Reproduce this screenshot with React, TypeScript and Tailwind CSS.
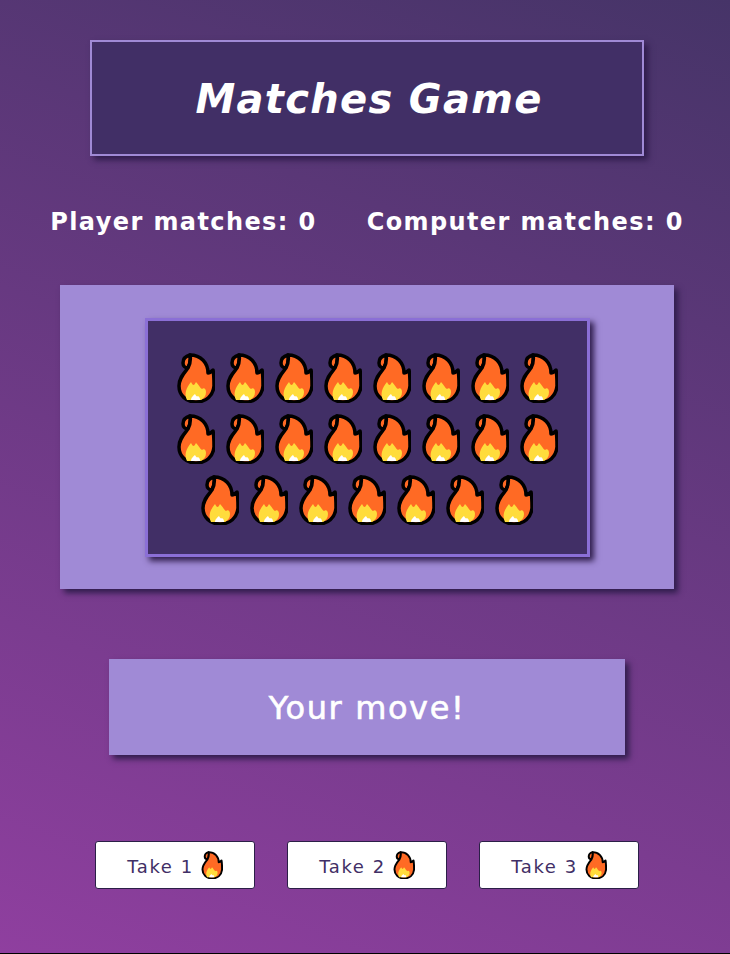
import React from 'react';

const Flame: React.FC<{ className?: string }> = ({ className }) => (
    <svg viewBox="0 0 38 50" className={className}>
        <path
            d="M13 2C9 3 6 6 6 10C6 13 8 15 11 15C13 11 14 7 13 2Z"
            fill="#ff6a24"
            stroke="#000"
            strokeWidth="3.5"
            strokeLinejoin="round"
        />
        <path
            d="M13 2C24 2 31 10 31 20C33 20 34 19 36 17C37 21 37 27 37 33C36 43 29 49 19 49C9 49 2 42 2 33C2 25 7 20 11 15C13 11 14 7 13 2Z"
            fill="#ff6a24"
            stroke="#000"
            strokeWidth="3.5"
            strokeLinejoin="round"
        />
        <path d="M10 47C7 41 9 35 14 29C16 33 17 33 19 29C22 32 23 35 25 36C27 34 29 36 29 39C29 43 27 45 24 47Z" fill="#ffdc3c" />
        <path d="M14 47C14 44 16 43 18 41C19 43 20 44 21 43C23 44 23 46 23 47Z" fill="#fff" />
    </svg>
);

const rows = [8, 8, 7];

export default function App() {
    return (
        <main className="h-[954px] overflow-hidden border-b border-black bg-[linear-gradient(20deg,#8f3f9f,#463468)] pl-1 flex flex-col items-center font-['DejaVu_Sans',sans-serif] text-white">
            <h1 className="mt-10 w-[554px] h-[116px] flex items-center justify-center border-2 border-[#a08ad6] bg-[#412f66] shadow-[4px_4px_6px_#2f1d4c] text-[40px] font-bold italic tracking-[1.3px] pl-1 pt-[2px]">
                Matches Game
            </h1>

            <div className="mt-[49px] flex gap-[50px] text-[24px] leading-[34px] font-semibold tracking-[1.4px] whitespace-nowrap">
                <span>Player matches: 0</span>
                <span>Computer matches: 0</span>
            </div>

            <section className="mt-[46px] w-[614px] h-[304px] flex items-center justify-center bg-[#a08ad6] shadow-[4px_4px_6px_#2f1d4c]">
                <div className="w-[445px] h-[239px] pt-[3px] flex flex-col items-center justify-center gap-[11px] border-[3px] border-[#8b6fd6] bg-[#412f66] shadow-[4px_4px_6px_#2f1d4c]">
                    {rows.map((count, r) => (
                        <div key={r} className="flex gap-[11px]">
                            {Array.from({ length: count }).map((_, i) => (
                                <Flame key={i} className="w-[38px] h-[50px]" />
                            ))}
                        </div>
                    ))}
                </div>
            </section>

            <div className="mt-[70px] w-[516px] h-[96px] pt-[2px] flex items-center justify-center bg-[#a08ad6] shadow-[4px_4px_6px_#2f1d4c] text-[32px] tracking-[1.6px] [-webkit-text-stroke:0.6px_white]">
                Your move!
            </div>

            <div className="mt-[86px] flex gap-8">
                {[1, 2, 3].map((n) => (
                    <button key={n} className="w-40 h-12 flex items-center justify-center gap-[7px] rounded-[3px] border border-[#2b1f47] bg-white text-[#412f66] text-[18px] tracking-[1.6px]">
                        <span className="pt-[3px]">Take {n}</span>
                        <Flame className="w-[22px] h-[28px]" />
                    </button>
                ))}
            </div>
        </main>
    );
}
